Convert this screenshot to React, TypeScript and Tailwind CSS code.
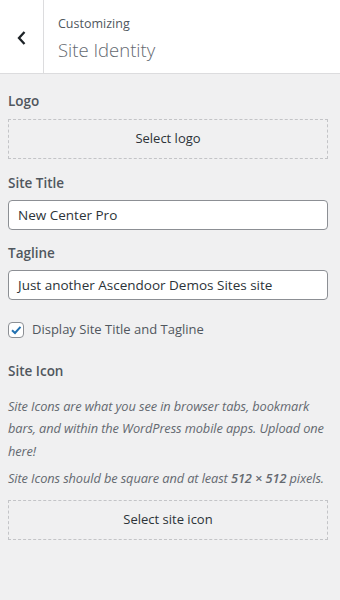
import React from "react";

const font = { fontFamily: '"Open Sans", "Noto Sans", sans-serif' };

export default function App() {
  return (
    <div className="w-[340px] h-[600px] bg-[#f0f0f1] text-[#50575e] overflow-hidden" style={font}>
      <div className="flex h-[74px] bg-white border-b border-[#dcdcde]">
        <div className="w-[44px] flex items-center justify-center border-r border-[#dcdcde]">
          <svg width="12" height="16" viewBox="0 0 12 16" className="mt-[2px]">
            <path d="M8.5 2 L3 8 L8.5 14" fill="none" stroke="#1d2327" strokeWidth="2.3" />
          </svg>
        </div>
        <div className="flex flex-col pl-[14px] pt-[15px]">
          <span className="text-[12.5px] leading-[18px] text-[#50575e]">Customizing</span>
          <span className="text-[18.5px] leading-[26px] font-light text-[#646970] mt-[4px]">Site Identity</span>
        </div>
      </div>
      <div className="pl-[8px] pr-[12px] pt-[17px] flex flex-col">
        <div className="text-[13.5px] font-semibold leading-[20px]">Logo</div>
        <div className="mt-[8px] h-[40px] border border-dashed border-[#c3c4c7] flex items-center justify-center text-[13px] text-[#2c3338]">
          Select logo
        </div>
        <div className="mt-[14px] text-[13.5px] font-semibold leading-[20px]">Site Title</div>
        <div className="mt-[7px] h-[30px] bg-white border border-[#8c8f94] rounded-[4px] flex items-center px-[9px] text-[13.5px] text-[#2c3338]">
          New Center Pro
        </div>
        <div className="mt-[13px] text-[13.5px] font-semibold leading-[20px]">Tagline</div>
        <div className="mt-[7px] h-[30px] bg-white border border-[#8c8f94] rounded-[4px] flex items-center px-[9px] text-[13.5px] text-[#2c3338]">
          Just another Ascendoor Demos Sites site
        </div>
        <div className="mt-[20px] flex items-center gap-[8px]">
          <div className="w-[16px] h-[16px] bg-white border border-[#8c8f94] rounded-[4px] flex items-center justify-center">
            <svg width="14" height="14" viewBox="0 0 14 14">
              <path d="M3 7.2 L6 10 L11.5 3.8" fill="none" stroke="#2271b1" strokeWidth="2" />
            </svg>
          </div>
          <span className="text-[13px] text-[#50575e]">Display Site Title and Tagline</span>
        </div>
        <div className="mt-[21px] text-[13.5px] font-semibold leading-[20px]">Site Icon</div>
        <p className="mt-[14px] text-[12.8px] tracking-[-0.1px] italic leading-[22.5px] text-[#646970] whitespace-nowrap">
          Site Icons are what you see in browser tabs, bookmark
          <br />
          bars, and within the WordPress mobile apps. Upload one
          <br />
          here!
        </p>
        <p className="mt-[5px] text-[12.8px] tracking-[-0.1px] italic leading-[22px] text-[#646970] whitespace-nowrap">
          Site Icons should be square and at least <strong className="font-semibold">512 × 512</strong> pixels.
        </p>
        <div className="mt-[11px] h-[40px] border border-dashed border-[#c3c4c7] flex items-center justify-center text-[13px] text-[#2c3338]">
          Select site icon
        </div>
      </div>
    </div>
  );
}
